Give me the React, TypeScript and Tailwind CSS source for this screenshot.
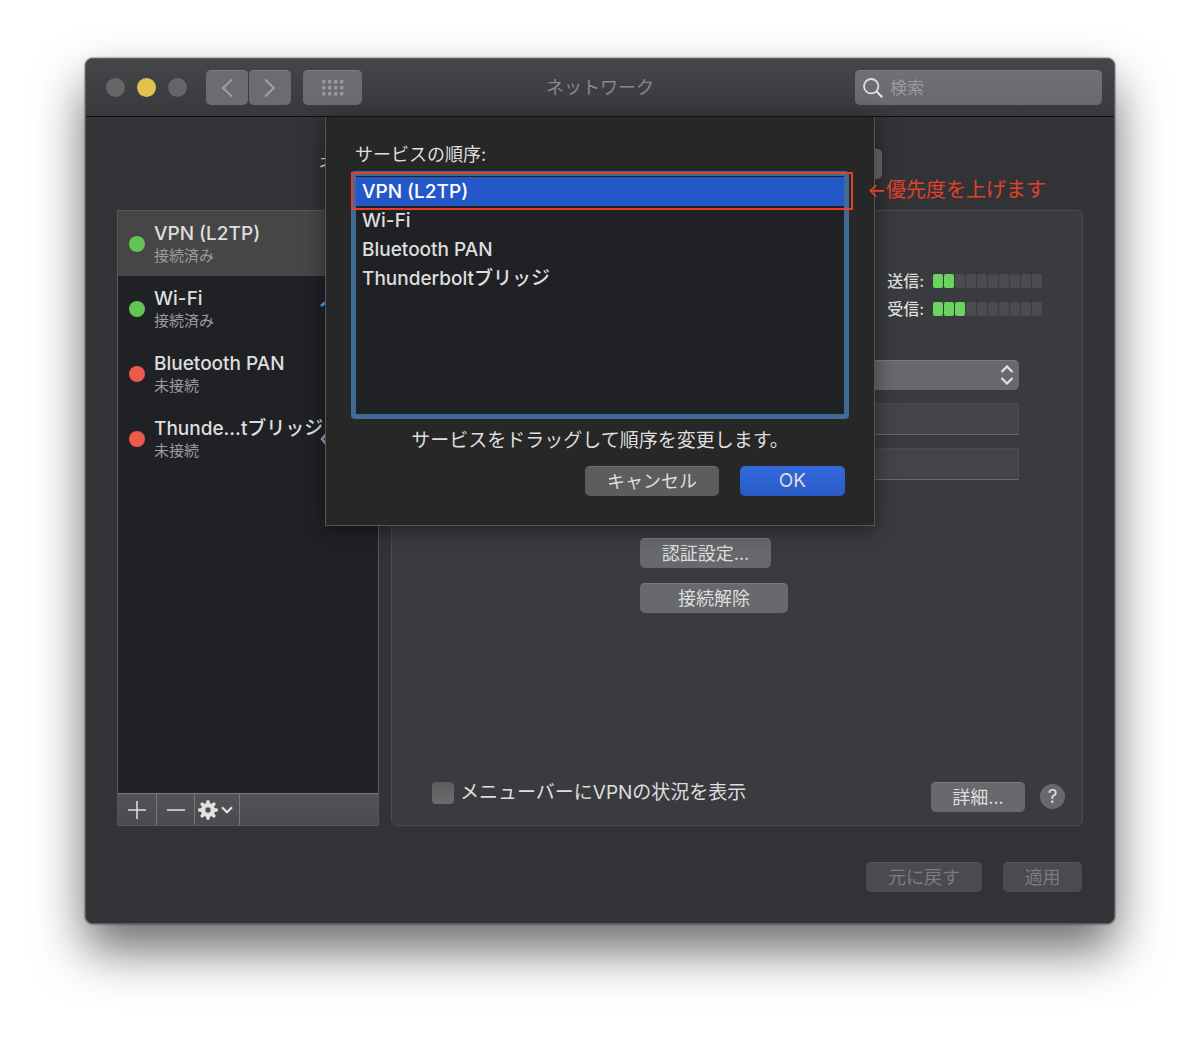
import { useState } from 'react';

type Service = {
  name: string;
  label?: string;
  status: string;
  connected: boolean;
  icon?: 'wifi' | 'bridge';
};

const SERVICES: Service[] = [
  { name: 'VPN (L2TP)', status: '接続済み', connected: true },
  { name: 'Wi-Fi', status: '接続済み', connected: true, icon: 'wifi' },
  { name: 'Bluetooth PAN', status: '未接続', connected: false },
  {
    name: 'Thunderboltブリッジ',
    label: 'Thunde…tブリッジ',
    status: '未接続',
    connected: false,
    icon: 'bridge',
  },
];

const METER_CELLS = 10;

const WifiIcon = () => (
  <svg viewBox="0 0 40 30" className="h-[30px] w-10" fill="none" stroke="#4fa3f0" strokeWidth="3">
    <path d="M1 12a27 27 0 0 1 38 0M8 19a17 17 0 0 1 24 0M15 25a8 8 0 0 1 10 0" />
  </svg>
);

const BridgeIcon = () => (
  <svg viewBox="0 0 40 16" className="h-4 w-10" fill="none" stroke="#9aa7ba" strokeWidth="2.5">
    <path d="M6 3 2 8l4 5M34 3l4 5-4 5" />
    <path d="M13 8h3M19 8h3M25 8h3" />
  </svg>
);

const GridIcon = () => (
  <svg viewBox="0 0 22 16" className="h-4 w-[22px]" fill="#99999c">
    {[0, 6, 12, 18].map((x) =>
      [0, 6, 12].map((y) => <rect key={`${x}-${y}`} x={x} y={y} width="3.4" height="3.4" rx="0.6" />),
    )}
  </svg>
);

const GearIcon = () => (
  <svg viewBox="-10 -10 20 20" className="size-5" fill="#e2e2e3">
    {[0, 45, 90, 135, 180, 225, 270, 315].map((deg) => (
      <path key={deg} d="M-2-6-1.4-9.8H1.4L2-6z" transform={`rotate(${deg})`} />
    ))}
    <circle r="4.9" fill="none" stroke="#e2e2e3" strokeWidth="4.4" />
  </svg>
);

const Meter = ({ label, value }: { label: string; value: number }) => (
  <div className="flex h-7 items-center gap-[9px]">
    <span className="text-base font-medium">{label}</span>
    <div
      role="meter"
      aria-label={label}
      aria-valuemin={0}
      aria-valuemax={METER_CELLS}
      aria-valuenow={value}
      className="flex gap-px"
    >
      {Array.from({ length: METER_CELLS }, (_, i) => (
        <span
          key={i}
          className={`h-[14px] w-[10px] rounded-[2px] ${i < value ? 'bg-[#6bd35f]' : 'bg-[#4b4c4f]'}`}
        />
      ))}
    </div>
  </div>
);

const Titlebar = () => (
  <header className="grid h-[58px] grid-cols-[1fr_auto_1fr] items-center rounded-t-[7px] border-b border-[#111214] bg-linear-to-b from-[#454649] to-[#38393c] px-3">
    <div className="flex items-center pl-2">
      <div className="flex gap-3">
        <button aria-label="閉じる" className="size-[19px] rounded-full bg-[#646567]" />
        <button aria-label="しまう" className="size-[19px] rounded-full bg-[#e2c14c]" />
        <button aria-label="拡大" className="size-[19px] rounded-full bg-[#646567]" />
      </div>
      <div className="ml-[19px] flex gap-px">
        <button
          aria-label="戻る"
          className="flex h-[35px] w-[42px] items-center justify-center rounded-[5px] border-t border-[#7b7c7f] bg-[#6b6c6f]"
        >
          <svg viewBox="0 0 12 20" className="h-5 w-3" fill="none" stroke="#a0a0a3" strokeWidth="2">
            <path d="M11 1.5 2 10l9 8.5" />
          </svg>
        </button>
        <button
          aria-label="進む"
          className="flex h-[35px] w-[42px] items-center justify-center rounded-[5px] border-t border-[#7b7c7f] bg-[#6b6c6f]"
        >
          <svg viewBox="0 0 12 20" className="h-5 w-3" fill="none" stroke="#a0a0a3" strokeWidth="2">
            <path d="m1 1.5 9 8.5-9 8.5" />
          </svg>
        </button>
      </div>
      <button
        aria-label="すべてを表示"
        className="ml-3 flex h-[35px] w-[59px] items-center justify-center rounded-[5px] border-t border-[#7b7c7f] bg-[#6b6c6f]"
      >
        <GridIcon />
      </button>
    </div>
    <h1 className="text-lg text-[#88898b]">ネットワーク</h1>
    <label className="ml-auto flex h-[35px] w-[247px] items-center gap-[7px] rounded-[5px] border-t border-[#7b7c7f] bg-linear-to-b from-[#707174] to-[#68696c] pl-2">
      <svg viewBox="0 0 20 20" className="size-5 shrink-0" fill="none" stroke="#e0e0e1" strokeWidth="1.8">
        <circle cx="8.2" cy="8.2" r="7.2" />
        <path d="m13.3 13.3 6 6" strokeWidth="2.2" />
      </svg>
      <input
        type="search"
        aria-label="検索"
        placeholder="検索"
        className="min-w-0 flex-1 bg-transparent text-[17px] outline-none placeholder:text-[#9a9b9d]"
      />
    </label>
  </header>
);

const Sidebar = ({ selected, onSelect }: { selected: string; onSelect: (name: string) => void }) => (
  <aside className="flex w-[262px] shrink-0 flex-col border border-[#57585a] bg-[#202125]">
    <ul className="flex-1">
      {SERVICES.map((s) => (
        <li key={s.name}>
          <button
            onClick={() => onSelect(s.name)}
            className={`flex h-[65px] w-full items-center pr-[18px] pl-[11px] text-left ${
              selected === s.name ? 'bg-[#464646]' : ''
            }`}
          >
            <span
              className={`mr-[9px] size-4 shrink-0 rounded-full ${s.connected ? 'bg-[#61c554]' : 'bg-[#ec5a4e]'}`}
            />
            <span className="flex min-w-0 flex-1 flex-col pt-px whitespace-nowrap">
              <span className="text-[19px] leading-6 font-medium">{s.label ?? s.name}</span>
              <span className="text-[15px] leading-5 text-[#9b9b9c]">{s.status}</span>
            </span>
            {s.icon && (
              <span className="shrink-0">{s.icon === 'wifi' ? <WifiIcon /> : <BridgeIcon />}</span>
            )}
          </button>
        </li>
      ))}
    </ul>
    <div className="flex h-8 border-t border-[#77787a] bg-linear-to-b from-[#525356] to-[#4a4b4e]">
      <button aria-label="追加" className="flex w-[39px] items-center justify-center border-r border-[#77787a]">
        <svg viewBox="0 0 18 18" className="size-[18px]" stroke="#dededf" strokeWidth="1.6">
          <path d="M9 0v18M0 9h18" />
        </svg>
      </button>
      <button aria-label="削除" className="flex w-[38px] items-center justify-center border-r border-[#77787a]">
        <svg viewBox="0 0 18 18" className="size-[18px]" stroke="#dededf" strokeWidth="1.6">
          <path d="M0 9h18" />
        </svg>
      </button>
      <button
        aria-label="アクション"
        className="flex w-[45px] items-center gap-[3px] border-r border-[#77787a] pl-[3px]"
      >
        <GearIcon />
        <svg viewBox="0 0 12 8" className="h-2 w-3" fill="none" stroke="#e2e2e3" strokeWidth="2.2">
          <path d="m1 1.2 5 5 5-5" />
        </svg>
      </button>
    </div>
  </aside>
);

const ServicePanel = () => (
  <section className="flex flex-1 flex-col rounded-md border border-[#4b4c4f] bg-[#3a3b3e] pt-14 pb-[13px]">
    <div className="flex flex-col items-end pr-10">
      <Meter label="送信:" value={2} />
      <Meter label="受信:" value={3} />
    </div>
    <div className="mt-[37px] mr-[63px] ml-[248px] flex flex-col items-start gap-[13px]">
      <div className="relative w-full">
        <select
          aria-label="構成"
          className="h-[30px] w-full appearance-none rounded-[5px] border-t border-[#7b7c7f] bg-[#68696c]"
        />
        <svg
          viewBox="0 0 14 20"
          className="pointer-events-none absolute top-[5px] right-[5px] h-5 w-[14px]"
          fill="none"
          stroke="#e2e2e3"
          strokeWidth="2.2"
        >
          <path d="m1.5 7 5.5-5.5L12.5 7M1.5 13 7 18.5l5.5-5.5" />
        </svg>
      </div>
      <input
        type="text"
        aria-label="サーバアドレス"
        className="h-8 w-full border border-[#4a4b4e] border-b-[#68696c] bg-[#434447] px-2"
      />
      <input
        type="text"
        aria-label="アカウント名"
        className="h-8 w-full border border-[#4a4b4e] border-b-[#68696c] bg-[#434447] px-2"
      />
    </div>
    <div className="mt-[58px] ml-[248px] flex flex-col items-start gap-[15px]">
      <button className="h-[30px] w-[131px] rounded-[5px] border-t border-[#7b7c7f] bg-[#68696c] leading-7">
        認証設定...
      </button>
      <button className="h-[30px] w-[148px] rounded-[5px] border-t border-[#7b7c7f] bg-[#68696c] leading-7">
        接続解除
      </button>
    </div>
    <div className="mt-auto flex items-start pr-[17px] pl-10">
      <label className="flex items-center gap-[6px]">
        <input
          type="checkbox"
          className="size-[22px] appearance-none rounded-[4px] border-t border-[#5a5b5d] bg-linear-to-b from-[#5c5d5f] to-[#6b6c6e]"
        />
        <span className="text-[19px] leading-[22px]">メニューバーにVPNの状況を表示</span>
      </label>
      <button className="ml-auto h-[30px] w-[94px] rounded-[5px] border-t border-[#7b7c7f] bg-[#68696c] leading-7">
        詳細...
      </button>
      <button
        aria-label="ヘルプ"
        className="mt-[2px] ml-[15px] size-[25px] rounded-full bg-[#68696c] text-[19px] leading-[25px]"
      >
        ?
      </button>
    </div>
  </section>
);

const OrderSheet = () => (
  <div
    role="dialog"
    aria-labelledby="order-title"
    className="absolute top-0 left-1/2 w-[550px] -translate-x-1/2 border border-t-0 border-[#555556] bg-[#272727] px-[25px] pt-6 pb-[29px] shadow-[0_4px_20px_rgba(0,0,0,0.45)]"
  >
    <h2 id="order-title" className="pl-1 leading-7">
      サービスの順序:
    </h2>
    <div className="relative mt-[2px]">
      <ul className="h-[248px] rounded-[4px] border-5 border-[#3f6b94] bg-[#202125] pt-px">
        {SERVICES.map((s, i) => (
          <li
            key={s.name}
            draggable
            className={`px-[6px] text-[19px] leading-[29px] font-medium ${i === 0 ? 'bg-[#2458c9] text-white' : ''}`}
          >
            {s.name}
          </li>
        ))}
      </ul>
      {/* callout around the first entry */}
      <div className="pointer-events-none absolute top-px -right-1 left-0 h-[38px] border-2 border-[#e0412a]" />
      <p className="pointer-events-none absolute top-[3px] left-full ml-[18px] text-xl leading-8 whitespace-nowrap text-[#e0412a]">
        ←優先度を上げます
      </p>
    </div>
    <p className="mt-2 text-center text-[19px] leading-7">サービスをドラッグして順序を変更します。</p>
    <div className="mt-[11px] flex justify-end gap-[21px] pr-1">
      <button className="h-[30px] w-[134px] rounded-[5px] border-t border-[#707070] bg-[#5d5d5d] leading-7">
        キャンセル
      </button>
      <button className="h-[30px] w-[105px] rounded-[5px] bg-linear-to-b from-[#3269de] to-[#295bc4] text-[19px] leading-[30px]">
        OK
      </button>
    </div>
  </div>
);

export default function App() {
  const [selected, setSelected] = useState(SERVICES[0].name);

  return (
    <main className="min-h-screen bg-white px-[85px] pt-[58px] pb-[113px] font-['Inter','Noto_Sans_CJK_JP',sans-serif] text-lg text-[#dededf]">
      <div className="rounded-lg border border-[#5b5c5e] bg-[#323337] shadow-[0_0_2px_rgba(0,0,0,0.8),0_26px_50px_rgba(0,0,0,0.58)]">
        <Titlebar />
        <div className="relative px-[31px] pt-8 pb-[31px]">
          <div className="flex justify-center">
            <label className="flex h-[30px] items-center gap-2 whitespace-nowrap">
              ネットワーク環境:
              <select
                aria-label="ネットワーク環境"
                className="h-[30px] w-[406px] appearance-none rounded-[5px] border-t border-[#7b7c7f] bg-[#68696c]"
              />
            </label>
          </div>
          <div className="mt-[31px] flex min-h-[616px] gap-3">
            <Sidebar selected={selected} onSelect={setSelected} />
            <ServicePanel />
          </div>
          <div className="mt-9 flex justify-end gap-[21px] pr-px">
            <button
              disabled
              className="h-[30px] w-[116px] rounded-[5px] border-t border-[#545558] bg-[#4a4b4e] leading-7 text-[#7b7c7e]"
            >
              元に戻す
            </button>
            <button
              disabled
              className="h-[30px] w-[79px] rounded-[5px] border-t border-[#545558] bg-[#4a4b4e] leading-7 text-[#7b7c7e]"
            >
              適用
            </button>
          </div>
          <OrderSheet />
        </div>
      </div>
    </main>
  );
}
